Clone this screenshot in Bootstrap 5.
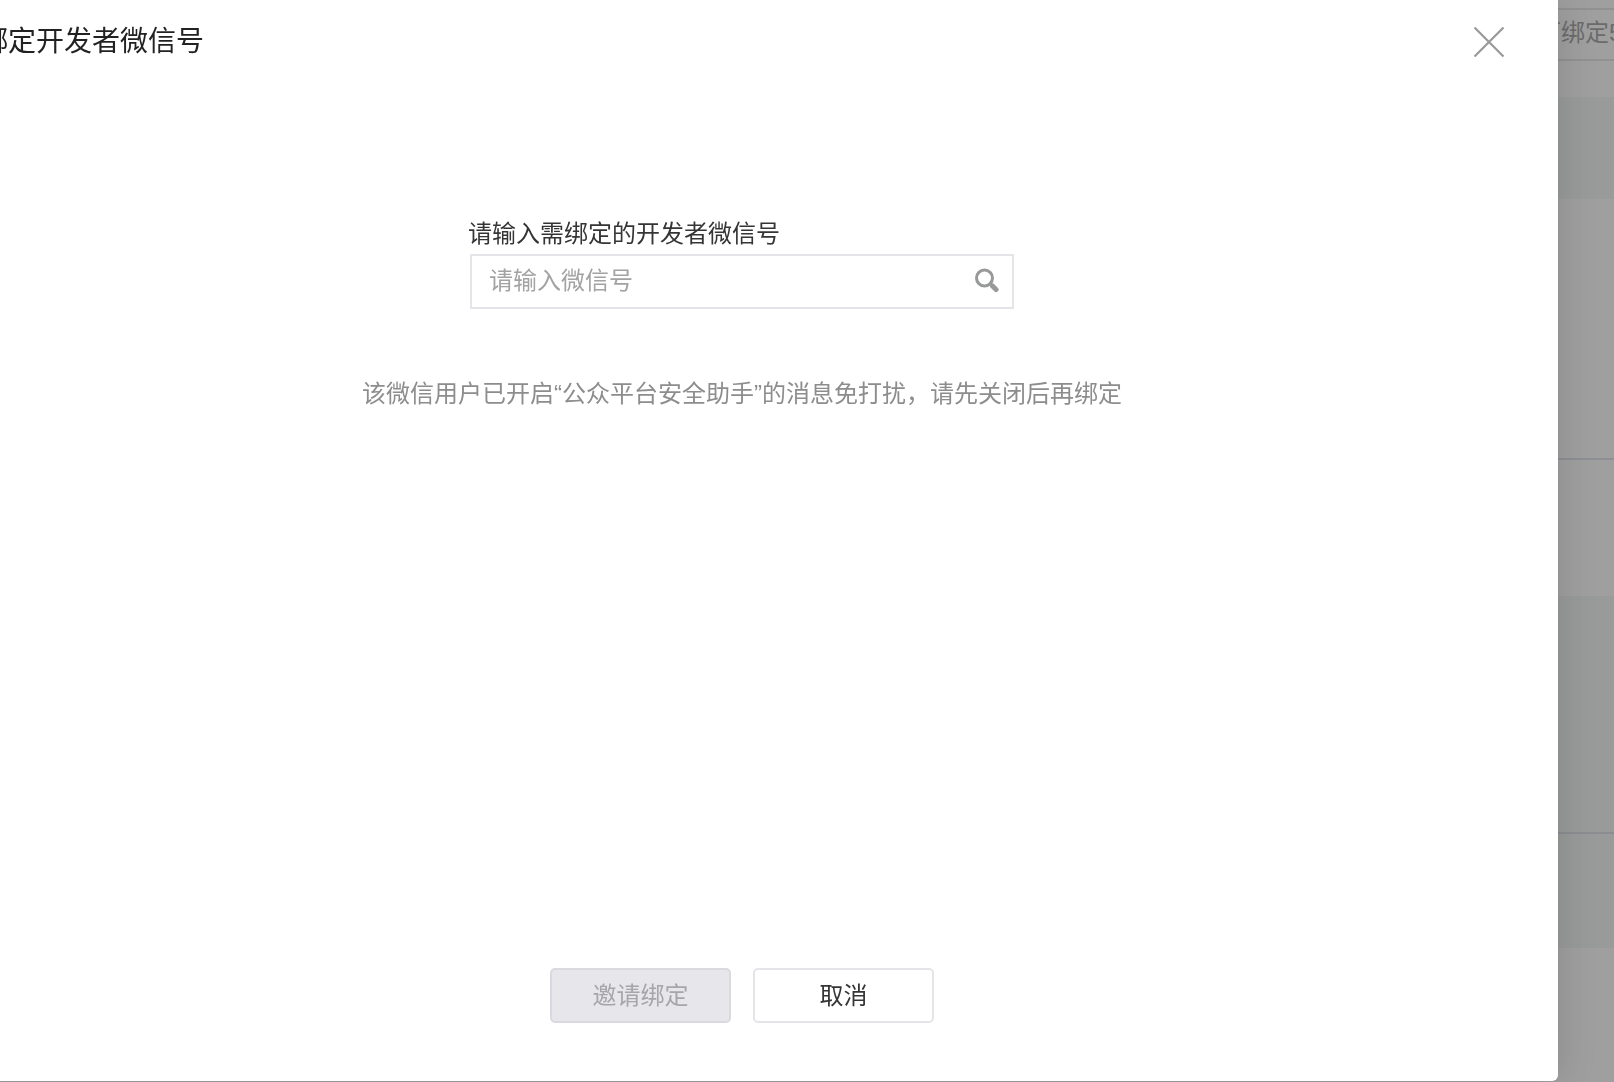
<!DOCTYPE html>
<html lang="zh-CN">
<head>
<meta charset="utf-8">
<meta name="viewport" content="width=device-width, initial-scale=1">
<title>绑定开发者微信号</title>
<link href="https://cdn.jsdelivr.net/npm/bootstrap@5.3.0/dist/css/bootstrap.min.css" rel="stylesheet">
<style>
body{font-family:"Liberation Sans","Noto Sans CJK SC",sans-serif;font-size:24px;line-height:36px;background:#9f9f9f;color:#353535}
.page-under{min-height:100vh;color:#6b6b6b}
.under-bar{height:97px;padding-top:8px}
.under-action{height:53px;border:2px solid #919192;border-right:0;margin-right:-60px;padding:5px 0 0 1px;width:140px;line-height:36px;white-space:nowrap}
.band{background:#989b99}
.band-head{height:102px}
.band-detail{height:259px}
.band-row{height:138px;border-top:2px solid #8c9094}
.band-block{height:236px}
.band-foot{height:116px;border-top:2px solid #8b8e90}
.dialog-layer{inset:0 56px 1px -74px}
.bind-dialog{border-radius:0 0 6px 6px;box-shadow:0 0 40px rgba(0,0,0,.14)}
.dialog-head{height:84px;padding:0 54px}
.dialog-title{font-size:28px;line-height:42px;font-weight:400;color:#222}
.dialog-close svg{display:block}
.bind-form{width:544px;margin-top:132px}
.bind-form label{line-height:36px;margin-bottom:2px;margin-left:-2px}
.search-box{border:2px solid #e4e4e9;height:55px;padding:0 13px 2px 17px}
.search-box input{font-size:24px;line-height:36px;color:#353535;padding:0}
.search-box input::placeholder{color:#a3a3a3;opacity:1}
.bind-tip{margin-top:67px;color:#8d8d8d}
.dialog-foot{gap:22px;padding-bottom:58px}
.dialog-foot .btn{width:181px;height:55px;padding:0;font-size:24px;line-height:36px;border:2px solid #e4e4e9;border-radius:5px;color:#353535;background:#fff}
.dialog-foot .btn:disabled{background:#e6e6eb;border-color:#d9dadf;color:#a6a6a9;opacity:1}
</style>
<script src="https://cdn.jsdelivr.net/npm/bootstrap@5.3.0/dist/js/bootstrap.bundle.min.js"></script>
</head>
<body class="overflow-hidden">
<div class="page-under overflow-hidden" aria-hidden="true">
  <div class="under-bar d-flex justify-content-end">
    <div class="under-action">可绑定5个</div>
  </div>
  <div class="band band-head"></div>
  <div class="band-detail"></div>
  <div class="band-row"></div>
  <div class="band band-block"></div>
  <div class="band band-foot"></div>
</div>
<div class="dialog-layer position-fixed">
  <section class="bind-dialog bg-white h-100 d-flex flex-column" role="dialog" aria-labelledby="dialogTitle">
    <header class="dialog-head d-flex align-items-center justify-content-between">
      <h1 class="dialog-title m-0" id="dialogTitle">绑定开发者微信号</h1>
      <button type="button" class="dialog-close btn p-0 border-0" aria-label="关闭">
        <svg width="30" height="30" viewBox="0 0 30 30" fill="none" stroke="#999" stroke-width="2.200"><path d="M.5.5l29 29M29.500 .5l-29 29"/></svg>
      </button>
    </header>
    <main class="flex-grow-1 d-flex flex-column align-items-center">
      <form class="bind-form">
        <label class="d-block" for="wechatId">请输入需绑定的开发者微信号</label>
        <div class="search-box d-flex align-items-center">
          <input type="text" id="wechatId" class="form-control border-0 rounded-0 shadow-none bg-transparent" placeholder="请输入微信号">
          <button type="button" class="btn p-0 border-0 flex-shrink-0" aria-label="搜索">
            <svg class="d-block" width="24" height="28" viewBox="0 0 24 28" fill="none" stroke="#979a99"><circle cx="9.500" cy="11" r="8" stroke-width="3"/><path d="M15 16.500l2 2" stroke-width="3"/><path d="M17.500 19l3.500 3.500" stroke-width="5" stroke-linecap="round"/></svg>
          </button>
        </div>
      </form>
      <p class="bind-tip mb-0">该微信用户已开启“公众平台安全助手”的消息免打扰，请先关闭后再绑定</p>
    </main>
    <footer class="dialog-foot d-flex justify-content-center">
      <button type="button" class="btn" disabled>邀请绑定</button>
      <button type="button" class="btn">取消</button>
    </footer>
  </section>
</div>
</body>
</html>
